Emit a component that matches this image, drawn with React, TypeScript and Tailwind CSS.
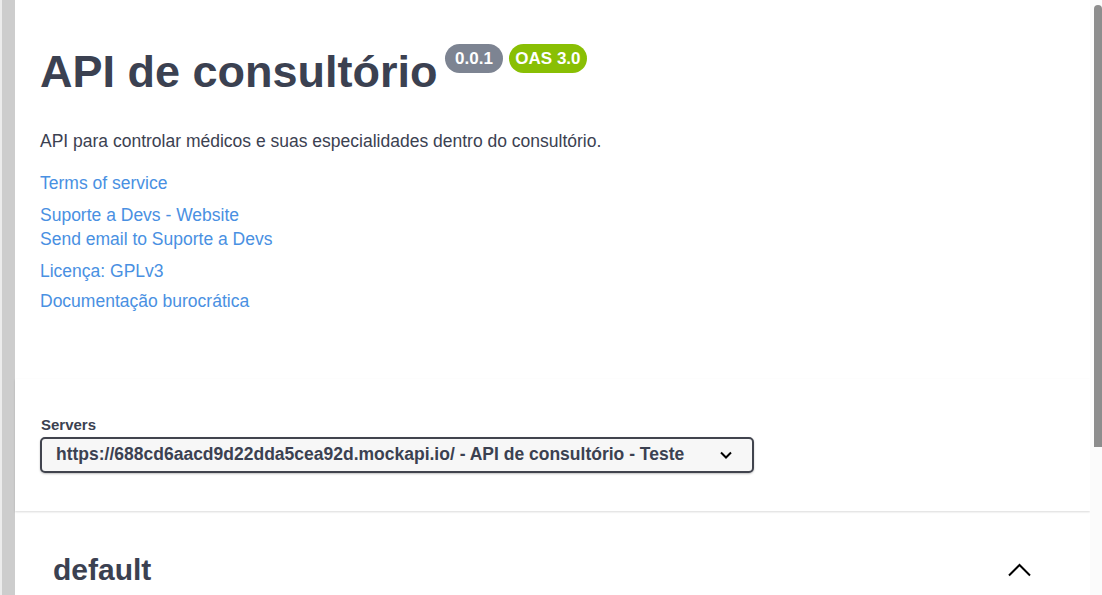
const links = {
  terms: "Terms of service",
  website: "Suporte a Devs - Website",
  email: "Send email to Suporte a Devs",
  license: "Licença: GPLv3",
  docs: "Documentação burocrática",
};

const serverUrl =
  "https://688cd6aacd9d22dda5cea92d.mockapi.io/ - API de consultório - Teste";

const App = () => {
  return (
    <div className="flex h-[595px] w-[1102px] overflow-hidden bg-white font-['Liberation_Sans',Arial,sans-serif] text-[#3b4151]">
      {/* window edge */}
      <div className="w-[2px] bg-[#ececec]" />
      <div className="w-[13px] bg-[#cdcdcd]" />

      <div className="flex flex-1 flex-col">
        <div className="px-[25px] pt-[49px]">
          <div className="flex items-start">
            <h2 className="text-[45px] font-bold leading-[45px]">
              API de consultório
            </h2>
            <span className="ml-[7px] -mt-[5px] flex h-[29px] items-center rounded-full bg-[#7d8492] px-[10.5px] text-[17px] font-bold text-white">
              0.0.1
            </span>
            <span className="ml-[6px] -mt-[5px] flex h-[29px] items-center rounded-full bg-[#89bf04] px-[6px] text-[17px] font-bold text-white">
              OAS 3.0
            </span>
          </div>

          <p className="mt-[35px] text-[17.5px] leading-[24px]">
            API para controlar médicos e suas especialidades dentro do
            consultório.
          </p>

          <div className="flex flex-col items-start text-[17.5px] leading-[24px] text-[#4990e2]">
            <a className="mt-[18px] cursor-pointer">{links.terms}</a>
            <div className="mt-[8px] flex flex-col items-start">
              <a className="cursor-pointer">{links.website}</a>
              <a className="cursor-pointer">{links.email}</a>
            </div>
            <a className="mt-[8px] cursor-pointer">{links.license}</a>
            <a className="mt-[6px] cursor-pointer">{links.docs}</a>
          </div>
        </div>

        <div className="mt-[66px] bg-white px-[25px] pt-[37px] pb-[38px] shadow-[0_1px_2px_0_rgba(0,0,0,0.15)]">
          <div className="pl-[1px] text-[15px] font-bold leading-[18px]">
            Servers
          </div>
          <div className="mt-[3px] flex h-[36px] w-[714px] items-center justify-between rounded-[5px] border-2 border-[#41444e] bg-[#f7f7f7] pl-[14px] pr-[20px] shadow-[0_1px_2px_0_rgba(0,0,0,0.25)]">
            <span className="text-[17.5px] font-bold leading-none">
              {serverUrl}
            </span>
            <svg width="12" height="8" viewBox="0 0 12 8" fill="none">
              <path d="M1 1.5 L6 6.5 L11 1.5" stroke="#000" strokeWidth="2" />
            </svg>
          </div>
        </div>

        <div className="flex items-center justify-between px-[25px] pt-[41px]">
          <h3 className="pl-[13px] text-[30px] font-bold leading-[36px]">
            default
          </h3>
          <svg
            className="mr-[34px]"
            width="23"
            height="14"
            viewBox="0 0 23 14"
            fill="none"
          >
            <path d="M1 12.5 L11.5 2 L22 12.5" stroke="#000" strokeWidth="2" />
          </svg>
        </div>
      </div>

      {/* scrollbar */}
      <div className="flex w-[12px] justify-end bg-[#fbfbfb] pt-[5px]">
        <div className="h-[442px] w-[8px] rounded-t-[4px] bg-[#8d8d8d]" />
      </div>
    </div>
  );
};

export default App;
